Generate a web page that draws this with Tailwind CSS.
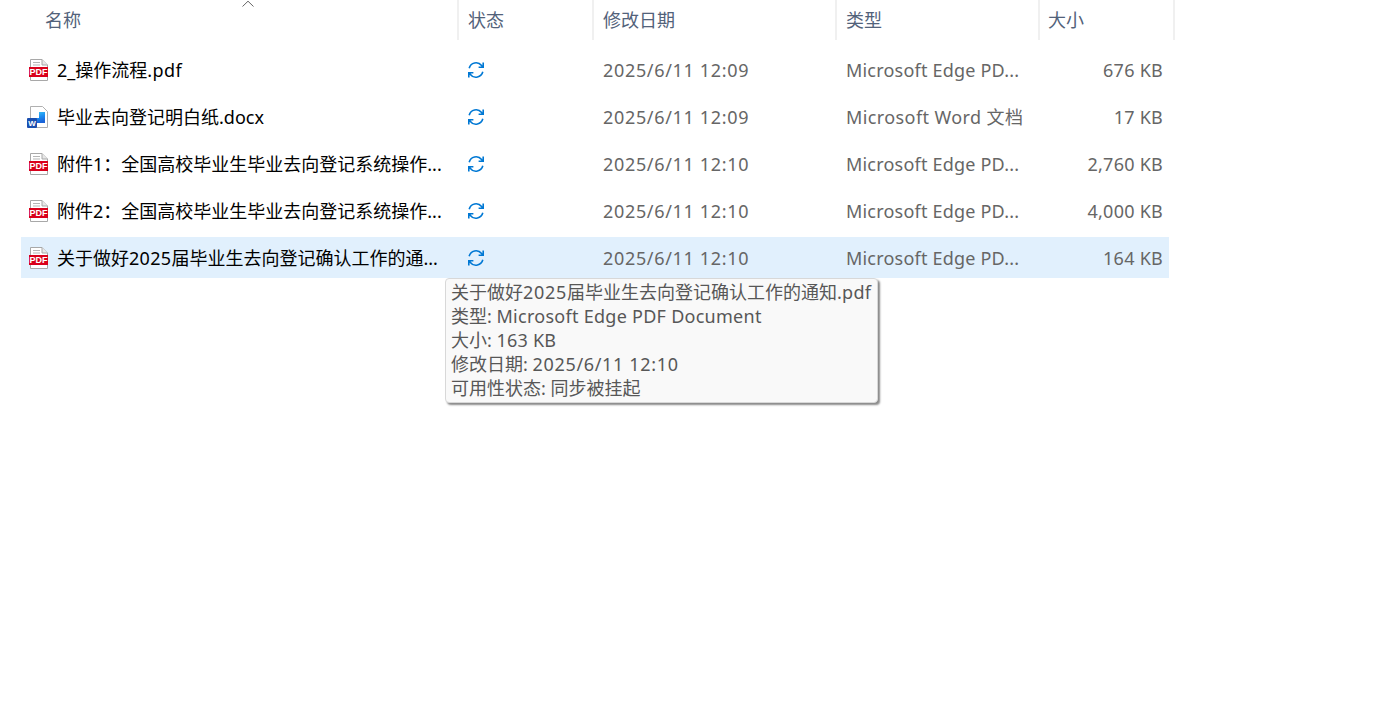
<!DOCTYPE html>
<html lang="zh-CN">
<head>
<meta charset="UTF-8">
<title>文件列表</title>
<script src="https://cdn.jsdelivr.net/npm/@tailwindcss/browser@4"></script>
</head>
<body class="bg-white overflow-hidden font-['Noto_Sans','Noto_Sans_CJK_SC',sans-serif] text-[18px]">
<svg class="absolute w-0 h-0">
  <symbol id="sync" viewBox="0 0 18 18">
    <path d="M2.2 7.2A7 7 0 0 1 14.6 4.6L16.2 6.3M16.2 1.6V6.3H11.6" fill="none" stroke="#0078d4" stroke-width="1.6"/>
    <path d="M15.8 10.8A7 7 0 0 1 3.4 13.4L1.8 11.7M1.8 16.4V11.7H6.4" fill="none" stroke="#0078d4" stroke-width="1.6"/>
  </symbol>
  <symbol id="pdfpage" viewBox="0 0 20 22">
    <path d="M1.5 .5H13L18.5 6V21.5H1.5Z" fill="#fff" stroke="#a8a8a8"/>
    <path d="M13 .5V6H18.5" fill="#e8e8e8" stroke="#a8a8a8"/>
    <path d="M4 3.5H11M4 6H11" stroke="#b5b5b5"/>
    <rect x="0" y="8" width="19" height="10" fill="#d9001b"/>
  </symbol>
</svg>

<div class="relative w-[1396px] h-[723px]">
  <!-- 表头 -->
  <div class="relative flex h-[40px] text-[#52627a]">
    <div class="w-[459px] pl-[45px] pt-[7px] border-r-2 border-[#f0f0f0] leading-[26px]">名称</div>
    <div class="w-[135px] pl-[9px] pt-[7px] border-r-2 border-[#f0f0f0] leading-[26px]">状态</div>
    <div class="w-[243px] pl-[9px] pt-[7px] border-r-2 border-[#f0f0f0] leading-[26px]">修改日期</div>
    <div class="w-[203px] pl-[9px] pt-[7px] border-r-2 border-[#f0f0f0] leading-[26px]">类型</div>
    <div class="w-[135px] pl-[8px] pt-[7px] border-r-2 border-[#f0f0f0] leading-[26px]">大小</div>
    <svg class="absolute left-[241px] top-0" width="14" height="8" viewBox="0 0 14 8"><path d="M1.5 6.5L7 1.2L12.5 6.5" fill="none" stroke="#666" stroke-width="1"/></svg>
  </div>

  <!-- 文件行 -->
  <div class="flex flex-col gap-[6px] pt-[9px] pl-[21px] w-[1169px] leading-[41px] whitespace-nowrap">
    <div class="flex h-[41px] pt-[2px] items-center">
      <div class="w-[36px] pl-[8px] -mt-[1px] flex"><svg width="20" height="22" viewBox="0 0 20 22"><use href="#pdfpage"/><text x="9.5" y="16.3" text-anchor="middle" font-size="9" font-weight="700" fill="#fff" font-family="Liberation Sans">PDF</text></svg></div>
      <div class="w-[410px] text-black">2_操作流程<span class="tracking-[0.4px]">.pdf</span></div>
      <div class="w-[136px] -mt-[1px]"><svg class="block" width="18" height="18"><use href="#sync"/></svg></div>
      <div class="w-[243px] text-[#666] tracking-[0.67px]">2025/6/11 12:09</div>
      <div class="w-[203px] text-[#666] tracking-[0.2px]">Microsoft Edge PD...</div>
      <div class="w-[114px] text-[#666] text-right tracking-[0.25px]">676 KB</div>
    </div>
    <div class="flex h-[41px] pt-[2px] items-center">
      <div class="w-[36px] pl-[6px] -mt-[1px] flex">
        <svg width="22" height="23" viewBox="0 0 22 23">
          <defs>
            <linearGradient id="wordfill" x1="0" y1="0" x2="0.3" y2="1">
              <stop offset="0" stop-color="#3cc4f5"/>
              <stop offset="0.55" stop-color="#1b8cf0"/>
              <stop offset="1" stop-color="#1a63d8"/>
            </linearGradient>
          </defs>
          <path d="M3.5 .5H15.5L20.5 5.5V21.5H3.5Z" fill="#fff" stroke="#b0b0b0"/>
          <path d="M12 6H18V17H8V12H12Z" fill="url(#wordfill)"/>
          <rect x="0" y="12" width="10" height="10" rx="1" fill="#1b4fb0"/>
          <text x="5" y="20.2" text-anchor="middle" font-size="8" font-weight="700" fill="#fff" font-family="Liberation Sans">W</text>
        </svg>
      </div>
      <div class="w-[410px] text-black">毕业去向登记明白纸.docx</div>
      <div class="w-[136px] -mt-[1px]"><svg class="block" width="18" height="18"><use href="#sync"/></svg></div>
      <div class="w-[243px] text-[#666] tracking-[0.67px]">2025/6/11 12:09</div>
      <div class="w-[203px] text-[#666] tracking-[0.4px]">Microsoft Word 文档</div>
      <div class="w-[114px] text-[#666] text-right tracking-[0.25px]">17 KB</div>
    </div>
    <div class="flex h-[41px] pt-[2px] items-center">
      <div class="w-[36px] pl-[8px] -mt-[1px] flex"><svg width="20" height="22" viewBox="0 0 20 22"><use href="#pdfpage"/><text x="9.5" y="16.3" text-anchor="middle" font-size="9" font-weight="700" fill="#fff" font-family="Liberation Sans">PDF</text></svg></div>
      <div class="w-[410px] text-black">附件1：全国高校毕业生毕业去向登记系统操作...</div>
      <div class="w-[136px] -mt-[1px]"><svg class="block" width="18" height="18"><use href="#sync"/></svg></div>
      <div class="w-[243px] text-[#666] tracking-[0.67px]">2025/6/11 12:10</div>
      <div class="w-[203px] text-[#666] tracking-[0.2px]">Microsoft Edge PD...</div>
      <div class="w-[114px] text-[#666] text-right tracking-[0.25px]">2,760 KB</div>
    </div>
    <div class="flex h-[41px] pt-[2px] items-center">
      <div class="w-[36px] pl-[8px] -mt-[1px] flex"><svg width="20" height="22" viewBox="0 0 20 22"><use href="#pdfpage"/><text x="9.5" y="16.3" text-anchor="middle" font-size="9" font-weight="700" fill="#fff" font-family="Liberation Sans">PDF</text></svg></div>
      <div class="w-[410px] text-black">附件2：全国高校毕业生毕业去向登记系统操作...</div>
      <div class="w-[136px] -mt-[1px]"><svg class="block" width="18" height="18"><use href="#sync"/></svg></div>
      <div class="w-[243px] text-[#666] tracking-[0.67px]">2025/6/11 12:10</div>
      <div class="w-[203px] text-[#666] tracking-[0.2px]">Microsoft Edge PD...</div>
      <div class="w-[114px] text-[#666] text-right tracking-[0.25px]">4,000 KB</div>
    </div>
    <div class="flex h-[41px] pt-[2px] items-center bg-[#e1f0fd]">
      <div class="w-[36px] pl-[8px] -mt-[1px] flex"><svg width="20" height="22" viewBox="0 0 20 22"><use href="#pdfpage"/><text x="9.5" y="16.3" text-anchor="middle" font-size="9" font-weight="700" fill="#fff" font-family="Liberation Sans">PDF</text></svg></div>
      <div class="w-[410px] text-black">关于做好<span class="tracking-[0.3px]">2025</span>届毕业生去向登记确认工作的通...</div>
      <div class="w-[136px] -mt-[1px]"><svg class="block" width="18" height="18"><use href="#sync"/></svg></div>
      <div class="w-[243px] text-[#666] tracking-[0.67px]">2025/6/11 12:10</div>
      <div class="w-[203px] text-[#666] tracking-[0.2px]">Microsoft Edge PD...</div>
      <div class="w-[114px] text-[#666] text-right tracking-[0.25px]">164 KB</div>
    </div>
  </div>

  <!-- 悬浮提示 -->
  <div class="absolute left-[445px] top-[278px] w-[433px] h-[125px] pl-[5px] pt-[1px] bg-[#f9f9f9] border border-[#d8d8d8] rounded-[4px] shadow-[2px_2px_2px_#8a8a8a] text-[#575757] leading-[24px] whitespace-nowrap">
    <div>关于做好<span class="tracking-[0.7px]">2025</span>届毕业生去向登记确认工作的通知<span class="tracking-[0.3px]">.pdf</span></div>
    <div>类型: <span class="tracking-[0.27px]">Microsoft Edge PDF Document</span></div>
    <div>大小: <span class="tracking-[0.2px]">163 KB</span></div>
    <div>修改日期: <span class="tracking-[0.67px]">2025/6/11 12:10</span></div>
    <div>可用性状态: 同步被挂起</div>
  </div>
</div>
</body>
</html>
